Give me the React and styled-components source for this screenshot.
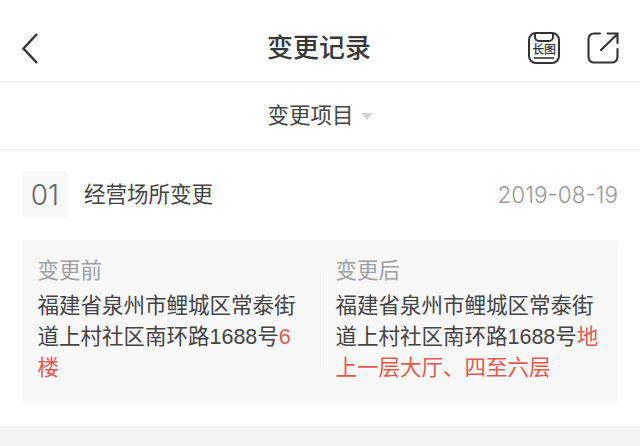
import React from "react";
import styled, { createGlobalStyle } from "styled-components";

const Global = createGlobalStyle`
  html, body { margin: 0; padding: 0; background: #fff; }
  body { width: 640px; height: 446px; overflow: hidden; font-family: "Liberation Sans", "Noto Sans CJK SC", sans-serif; }
`;
const Page = styled.div`
  width: 640px; height: 446px; display: flex; flex-direction: column; background: #fff; color: #333;
`;
const Header = styled.header`
  height: 67px; padding: 14px 20px 0; flex: none; display: grid; grid-template-columns: 1fr auto 1fr; align-items: center;
  border-bottom: 1px solid #ececec;
`;
const Title = styled.h1`
  margin: 0 1px 0 -1px; font-size: 26px; line-height: 34px; font-weight: 500; color: #383838;
`;
const Actions = styled.div`
  display: flex; justify-content: flex-end; gap: 25px; align-items: center;
`;
const IconButton = styled.span`
  display: flex; width: 34px; height: 34px; align-items: center; justify-content: center;
`;
const FilterBar = styled.div`
  height: 67px; flex: none; display: flex; align-items: center; justify-content: center; gap: 7px;
  border-bottom: 1px solid #eeeeee;
`;
const FilterLabel = styled.span`
  font-size: 21.5px; line-height: 30px; color: #444;
`;
const Caret = styled.span`
  width: 0; height: 0; border-left: 6px solid transparent; border-right: 6px solid transparent;
  border-top: 7px solid #d2d2d2; margin-top: 1px;
`;
const Section = styled.section`
  padding: 21px 22px 22px; flex: none; display: flex; flex-direction: column; gap: 22px;
`;
const RecordRow = styled.div`
  display: flex; align-items: center; height: 47px;
`;
const Badge = styled.span`
  width: 46px; height: 47px; border-radius: 4px; background: #f8f8f8; display: flex; align-items: center;
  justify-content: center; font-size: 28px; color: #666; font-family: "Inter", "Liberation Sans", sans-serif; font-weight: 300;
`;
const RecordName = styled.span`
  margin-left: 16px; font-size: 21.5px; line-height: 30px; color: #444;
`;
const RecordDate = styled.span`
  margin-left: auto; font-size: 22.5px; color: #999; font-family: "Inter", "Liberation Sans", sans-serif; font-weight: 300;
`;
const CompareCard = styled.div`
  height: 164px; box-sizing: border-box; background: #f8f8f8; border-radius: 4px; display: grid;
  grid-template-columns: 298px 298px; padding-top: 16px;
`;
const Column = styled.div`
  padding: 0 15px 0 15.5px; position: relative;
  ${p => p.$right && `
    &::before { content: ""; position: absolute; left: 0; top: 16px; height: 96px; width: 1px; background: #eeeeee; }
  `}
`;
const ColumnLabel = styled.div`
  font-size: 21.5px; line-height: 30px; color: #a0a0a0;
`;
const ColumnText = styled.div`
  font-size: 21.5px; line-height: 31px; color: #444; margin-top: 5px; word-break: break-all;
`;
const Changed = styled.span`
  color: #e4594c;
`;
const Footer = styled.div`
  flex: 1; background: #f4f4f4;
`;

const BackIcon = () => (
  <svg width="20" height="32" viewBox="0 0 20 32" fill="none" stroke="#333" strokeWidth="2.4">
    <path d="M17 2 L3.5 16.5 L17 31" />
  </svg>
);
const LongImageIcon = () => (
  <svg width="34" height="34" viewBox="0 0 34 34" fill="none" stroke="#333" strokeWidth="2">
    <rect x="2" y="2" width="30" height="30" rx="7" />
    <path d="M8 2.5 V6 a4 4 0 0 0 4 4 h10 a4 4 0 0 0 4 -4 V2.5" />
    <path d="M7 27 H27" strokeWidth="1.6" />
    <text x="17" y="23" textAnchor="middle" fontSize="12" fill="#333" stroke="none" fontFamily="Noto Sans CJK SC" fontWeight="500" letterSpacing="-0.3">长图</text>
  </svg>
);
const ShareIcon = () => (
  <svg width="34" height="34" viewBox="0 0 34 34" fill="none" stroke="#333" strokeWidth="2.1" strokeLinecap="round">
    <path d="M14 2.5 H8 a5.5 5.5 0 0 0 -5.5 5.5 V26 a5.5 5.5 0 0 0 5.5 5.5 H26 a5.5 5.5 0 0 0 5.5 -5.5 V18" />
    <path d="M15 19 L31 3.5 M21.5 2.5 H31.5 V12" />
  </svg>
);

export default function App() {
  return (
    <Page>
      <Global />
      <Header>
        <BackIcon />
        <Title>变更记录</Title>
        <Actions>
          <IconButton><LongImageIcon /></IconButton>
          <IconButton><ShareIcon /></IconButton>
        </Actions>
      </Header>
      <FilterBar>
        <FilterLabel>变更项目</FilterLabel>
        <Caret />
      </FilterBar>
      <Section>
        <RecordRow>
          <Badge>01</Badge>
          <RecordName>经营场所变更</RecordName>
          <RecordDate>2019-08-19</RecordDate>
        </RecordRow>
        <CompareCard>
          <Column>
            <ColumnLabel>变更前</ColumnLabel>
            <ColumnText>福建省泉州市鲤城区常泰街道上村社区南环路1688号<Changed>6楼</Changed></ColumnText>
          </Column>
          <Column $right>
            <ColumnLabel>变更后</ColumnLabel>
            <ColumnText>福建省泉州市鲤城区常泰街道上村社区南环路1688号<Changed>地上一层大厅、四至六层</Changed></ColumnText>
          </Column>
        </CompareCard>
      </Section>
      <Footer />
    </Page>
  );
}
